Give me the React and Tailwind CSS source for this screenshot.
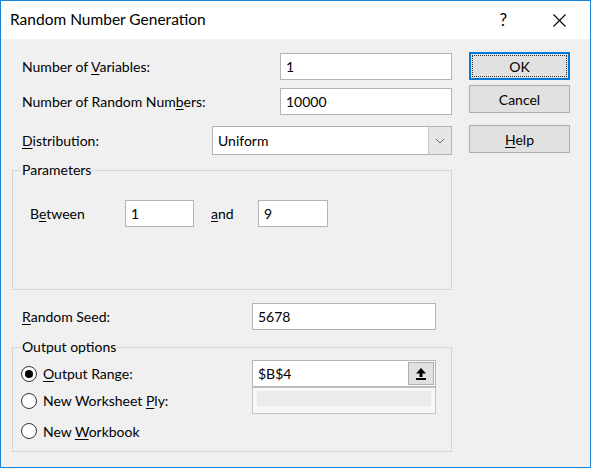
import React from "react";

function U({ children }) {
  return <span className="underline decoration-1 underline-offset-[2px]">{children}</span>;
}

function TextBox({ value, className = "" }) {
  return (
    <div className={`h-[27px] bg-white border border-[#b4b4b4] flex items-center px-[5px] ${className}`}>
      {value}
    </div>
  );
}

function Button({ children, focused = false }) {
  if (focused) {
    return (
      <div className="h-[28px] border-2 border-[#0078d7] bg-[#e1e1e1] p-[1px]">
        <div className="h-full border border-dotted border-[#333] flex items-center justify-center">
          {children}
        </div>
      </div>
    );
  }
  return (
    <div className="h-[28px] border border-[#adadad] bg-[#e1e1e1] flex items-center justify-center">
      {children}
    </div>
  );
}

function Radio({ checked = false }) {
  return (
    <span className="w-[16px] h-[16px] rounded-full border border-[#333] bg-white flex items-center justify-center shrink-0">
      {checked && <span className="w-[8px] h-[8px] rounded-full bg-black" />}
    </span>
  );
}

export default function App() {
  return (
    <div className="w-[591px] h-[468px] border border-[#1883d7] bg-[#f0f0f0] flex flex-col text-[14px] text-black font-['Lato',sans-serif]">
      {/* Title bar */}
      <div className="h-[38px] bg-white flex items-center pl-[9px] pr-[24px] shrink-0">
        <span className="text-[15.5px]">Random Number Generation</span>
        <div className="ml-auto flex items-center">
          <span className="text-[17px] mr-[46px]">?</span>
          <svg width="13" height="13" viewBox="0 0 13 13">
            <path d="M0.5 0.5 L12.5 12.5 M12.5 0.5 L0.5 12.5" stroke="#000" strokeWidth="1.1" />
          </svg>
        </div>
      </div>

      {/* Body */}
      <div className="flex pl-[11px] pt-[13px]">
        <div className="w-[440px] flex flex-col">
          <div className="mt-[1px] h-[27px] flex items-center justify-between">
            <span className="pl-[10px]">Number of <U>V</U>ariables:</span>
            <TextBox value="1" className="w-[172px]" />
          </div>
          <div className="mt-[8px] h-[27px] flex items-center justify-between">
            <span className="pl-[10px]">Number of Random Num<U>b</U>ers:</span>
            <TextBox value="10000" className="w-[172px]" />
          </div>
          <div className="mt-[11px] h-[29px] flex items-center justify-between">
            <span className="pl-[10px]"><U>D</U>istribution:</span>
            <div className="w-[240px] h-[29px] bg-white border border-[#b4b4b4] flex items-stretch">
              <span className="flex-1 flex items-center px-[5px]">Uniform</span>
              <span className="w-[23px] bg-[#e6e6e6] border-l border-[#c4c4c4] flex items-center justify-center">
                <svg width="10" height="6" viewBox="0 0 10 6">
                  <path d="M1 1 L5 5 L9 1" fill="none" stroke="#666" strokeWidth="1" />
                </svg>
              </span>
            </div>
          </div>

          <fieldset className="mt-[5px] h-[130px] border border-[#d5d5d5]">
            <legend className="ml-[8px] px-[1px] leading-[20px]">Parameters</legend>
            <div className="mt-[20px] h-[26px] flex items-center">
              <span className="w-[112px] pl-[17px]">B<U>e</U>tween</span>
              <TextBox value="1" className="w-[69px] h-[26px]" />
              <span className="ml-[17px] w-[47px]"><U>a</U>nd</span>
              <TextBox value="9" className="w-[70px] h-[26px]" />
            </div>
          </fieldset>

          <div className="mt-[13px] h-[27px] flex items-center">
            <span className="w-[240px] pl-[10px]"><U>R</U>andom Seed:</span>
            <TextBox value="5678" className="w-[184px]" />
          </div>

          <fieldset className="mt-[7px] h-[115px] border border-[#d5d5d5]">
            <legend className="ml-[8px] px-[1px] leading-[20px]">Output options</legend>
            <div className="mt-[3px] h-[27px] flex items-center">
              <div className="w-[239px] pl-[8px] flex items-center gap-[6px]">
                <Radio checked />
                <span><U>O</U>utput Range:</span>
              </div>
              <div className="w-[184px] h-[27px] bg-white border border-[#b4b4b4] flex items-center">
                <span className="flex-1 px-[5px]">$B$4</span>
                <span className="w-[26px] h-[23px] mr-[1px] bg-[#e1e1e1] border border-[#adadad] flex items-center justify-center">
                  <svg width="12" height="14" viewBox="0 0 12 14">
                    <polygon points="6,1 1,6.5 11,6.5" fill="#000" />
                    <rect x="4.5" y="6" width="3" height="4" fill="#000" />
                    <rect x="1" y="11" width="10" height="2" fill="#000" />
                  </svg>
                </span>
              </div>
            </div>
            <div className="h-[27px] flex items-center">
              <div className="w-[239px] pl-[8px] flex items-center gap-[6px]">
                <Radio />
                <span>New Worksheet <U>P</U>ly:</span>
              </div>
              <div className="w-[184px] h-[27px] bg-[#f7f7f7] border border-[#c4c4c4] px-[4px] pt-[3px]">
                <div className="h-[15px] bg-[#ebebeb]" />
              </div>
            </div>
            <div className="mt-[4px] h-[26px] flex items-center">
              <div className="w-[239px] pl-[8px] flex items-center gap-[6px]">
                <Radio />
                <span>New <U>W</U>orkbook</span>
              </div>
            </div>
          </fieldset>
        </div>

        <div className="ml-[17px] w-[101px] flex flex-col">
          <Button focused>OK</Button>
          <div className="mt-[5px]">
            <Button>Cancel</Button>
          </div>
          <div className="mt-[12px]">
            <Button><span><U>H</U>elp</span></Button>
          </div>
        </div>
      </div>
    </div>
  );
}
